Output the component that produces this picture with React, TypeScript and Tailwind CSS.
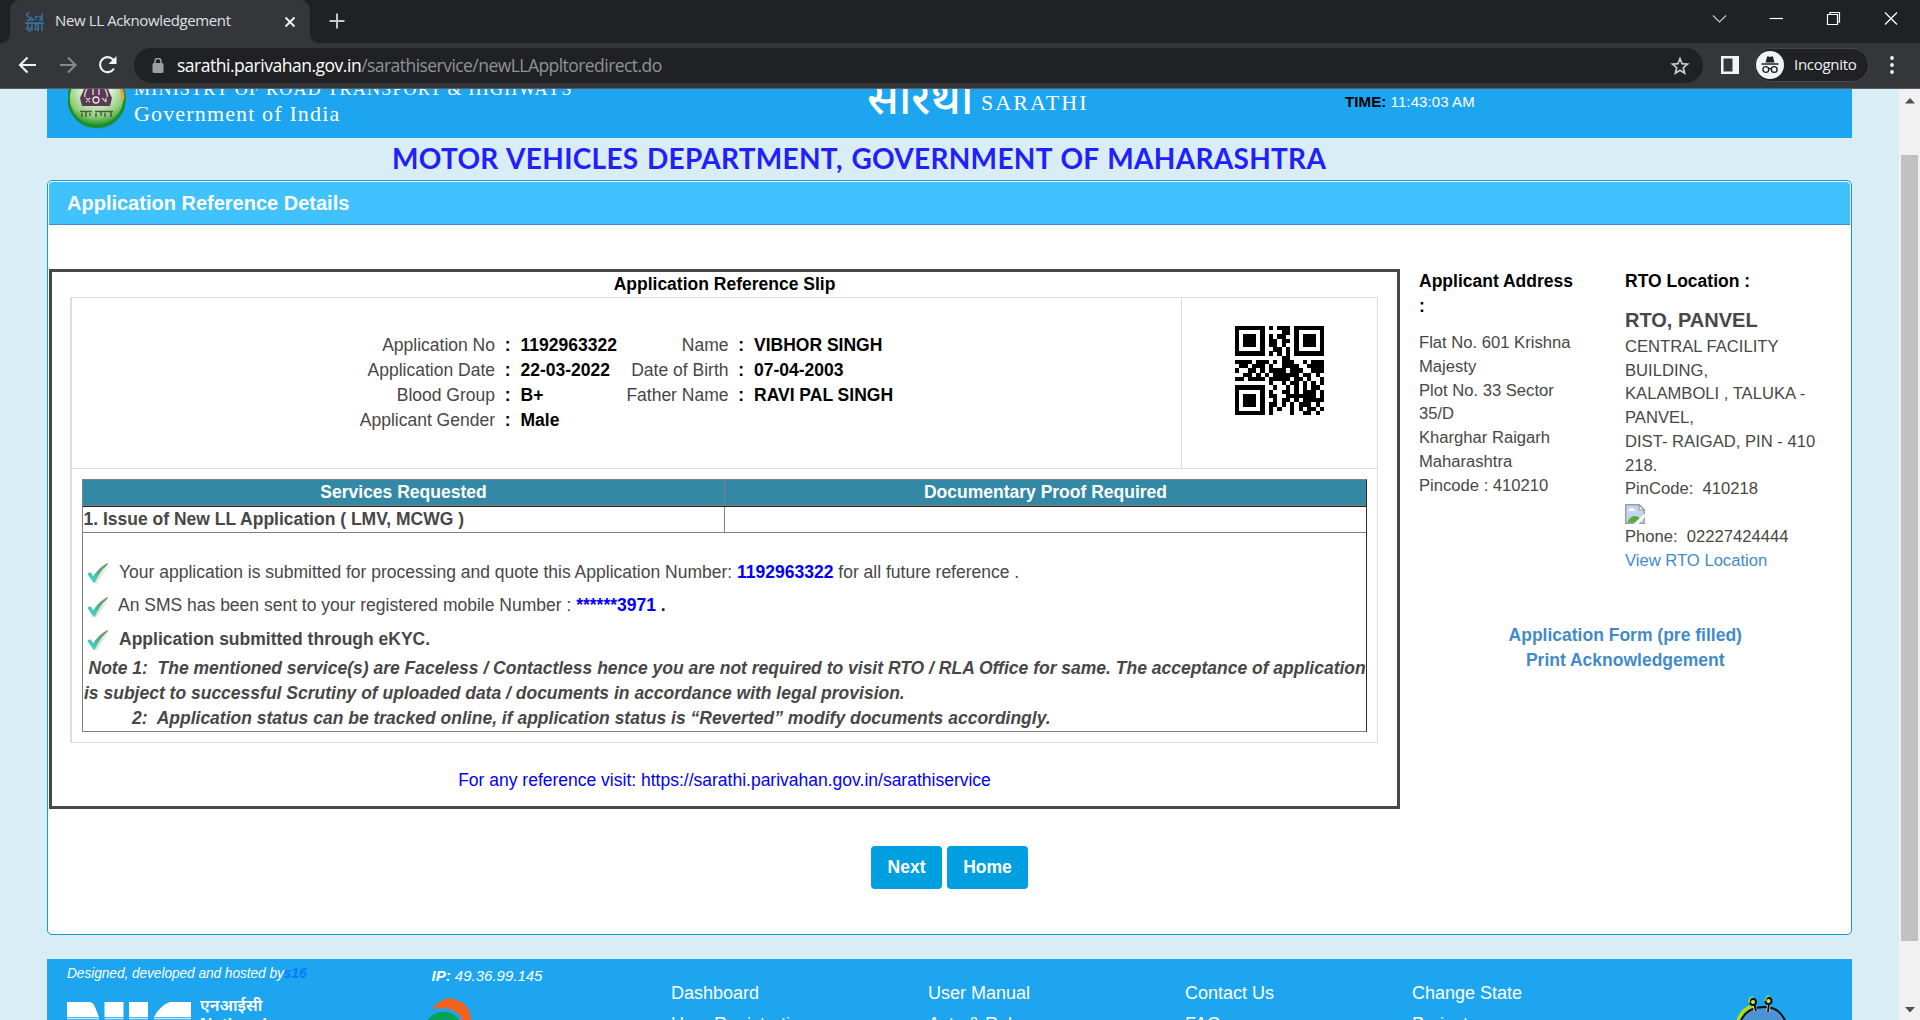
import React from "react";

const UI = "font-['Open_Sans','Noto_Sans',sans-serif]";

const QR = [
  "111111101011101111111",
  "100000100001101000001",
  "101110101011001011101",
  "101110101101101011101",
  "101110101101001011101",
  "100000100110101000001",
  "111111101010101111111",
  "000000000001100000000",
  "111101110101110010111",
  "011011101001111001111",
  "100110101111011100111",
  "001101010111111011010",
  "110111101111101101001",
  "000000001001011010101",
  "111111100100101010110",
  "100000101001101011101",
  "101110101100111111101",
  "101110100101101011111",
  "101110101101010111010",
  "100000101010010101101",
  "111111101000010011010",
];

function QrCode() {
  return (
    <svg width="89" height="89" viewBox="0 0 21 21" shapeRendering="crispEdges">
      {QR.flatMap((row, y) =>
        row.split("").map((c, x) => (c === "1" ? <rect key={`${x}-${y}`} x={x} y={y} width="1.02" height="1.02" /> : null))
      )}
    </svg>
  );
}

function TitleBar() {
  return (
    <div className="flex h-[43px] shrink-0 items-stretch bg-[#202124] text-[#dfe1e5]">
      <div className="w-[10px] bg-[#35363a]">
        <div className="h-full rounded-br-[9px] bg-[#202124]" />
      </div>
      <div className="flex w-[300px] items-center rounded-t-[10px] bg-[#35363a] pl-[15px]">
        <svg width="19" height="20" viewBox="0 0 19 20" fill="none" stroke="#3679a8" strokeWidth="1.3" className="shrink-0">
          <path d="M4 1C0 2 2 4 4 5s2 4-2 3M7 5c-3 1-1 5 1 2v2M11 8V5c1-1 2-1 2 0M14 5c3-1 3 3 0 3M17 1v8" />
          <path d="M0 11h19M3 11v3c0 3 4 4 4 0v-3v8M10 11c3 3-1 5 0 6s3 2 4-2M13 11v8M17 11v8M1 15c1 3 3 4 5 4" />
        </svg>
        <span className={`${UI} ml-[11px] w-[180px] pb-[3px] text-[15px] leading-5 tracking-[-0.38px] whitespace-nowrap`}>New LL Acknowledgement</span>
        <svg width="12" height="12" viewBox="0 0 12 12" className="ml-[49px] shrink-0" stroke="#f1f3f4" strokeWidth="1.9">
          <path d="M1.500 1.500L10.500 10.500M10.500 1.500L1.500 10.500" />
        </svg>
      </div>
      <div className="w-[10px] bg-[#35363a]">
        <div className="h-full rounded-bl-[9px] bg-[#202124]" />
      </div>
      <svg width="16" height="16" viewBox="0 0 16 16" className="mt-[13px] ml-[9px]" stroke="#c4c7ca" strokeWidth="2">
        <path d="M8 0.5V15.5M0.5 8H15.5" />
      </svg>
      <div className="flex-1" />
      <svg width="200" height="38" viewBox="0 0 200 38" className="mr-[15px]" fill="none" stroke="#fff" strokeWidth="1.2">
        <path d="M8 15.500L14.500 22L21 15.500" stroke="#c4c7ca" />
        <path d="M64.500 18.500H78" />
        <path d="M122.500 14.500H132.500V24.500H122.500ZM125 14V12.500H134.500V22H133" />
        <path d="M180 12.500L192 24.500M192 12.500L180 24.500" />
      </svg>
    </div>
  );
}

function Toolbar() {
  return (
    <div className="flex h-[46px] shrink-0 items-start border-b border-[#5a5b5e] bg-[#35363a]">
      <svg width="134" height="44" viewBox="0 0 134 44" fill="none" stroke="#f1f3f4" strokeWidth="2.1" className="shrink-0">
        <path d="M36 22H21M27.500 14.500L20 22L27.500 29.500" />
        <path d="M60 22H75M68 14.500L75.500 22L68 29.500" stroke="#87888b" />
        <path d="M114 25.500A7.500 7.500 0 1 1 113 16.500L115 18.500" />
        <path d="M116.500 13V21H108.500Z" fill="#f1f3f4" stroke="none" />
      </svg>
      <div className="mt-[5px] flex h-[35px] w-[1569px] items-center rounded-full bg-[#202124] pl-[18px]">
        <svg width="12" height="15" viewBox="0 0 12 15" className="shrink-0">
          <rect x="0.500" y="5" width="11" height="10" rx="1.500" fill="#9aa0a6" />
          <path d="M3 6V3.500A3 3 0 0 1 9 3.500V6" fill="none" stroke="#9aa0a6" strokeWidth="1.600" />
        </svg>
        <div className={`${UI} ml-[13px] flex pb-[1px] text-[17.5px] leading-6 whitespace-nowrap`}>
          <span className="tracking-[-0.48px] text-white">sarathi.parivahan.gov.in</span>
          <span className="tracking-[-0.55px] text-[#8f949a]">/sarathiservice/newLLAppltoredirect.do</span>
        </div>
        <div className="flex-1" />
        <svg width="20" height="20" viewBox="0 0 20 20" className="mr-[13px] shrink-0" fill="none" stroke="#c8cbcf" strokeWidth="1.700">
          <path d="M10 2.500L12 7.700L17.500 8.100L13.300 11.700L14.600 17.200L10 14.300L5.400 17.200L6.700 11.700L2.500 8.100L8 7.700Z" />
        </svg>
      </div>
      <svg width="18" height="18" viewBox="0 0 18 18" className="mt-[13px] ml-[18px]">
        <path fill="#f1f3f4" fillRule="evenodd" d="M0 0H18V18H0ZM2.500 2.500V15.500H11.500V2.500Z" />
      </svg>
      <div className="mt-[5px] ml-[15px] flex h-[34px] w-[115px] items-center rounded-full border border-[#45464a] bg-[#202124] pl-[1px]">
        <svg width="28" height="28" viewBox="0 0 28 28" className="shrink-0">
          <circle cx="14" cy="14" r="14" fill="#f1f3f4" />
          <path d="M9.500 11.500L11 6Q11.300 5 12.500 5.500L14 6L15.500 5.500Q16.700 5 17 6L18.500 11.500Z" fill="#202124" />
          <path d="M5.500 13H22.500" stroke="#202124" strokeWidth="1.500" />
          <g fill="none" stroke="#202124" strokeWidth="1.400">
            <circle cx="9.800" cy="18.500" r="2.900" />
            <circle cx="18.200" cy="18.500" r="2.900" />
            <path d="M12.700 18Q14 17 15.300 18" />
          </g>
        </svg>
        <span className={`${UI} ml-[10px] pb-[2px] text-[15px] leading-5 tracking-[-0.3px] text-[#f1f3f4]`}>Incognito</span>
      </div>
      <svg width="4" height="20" viewBox="0 0 4 20" className="mt-[12px] ml-[21px]" fill="#f1f3f4">
        <circle cx="2" cy="3" r="1.900" />
        <circle cx="2" cy="10" r="1.900" />
        <circle cx="2" cy="17" r="1.900" />
      </svg>
    </div>
  );
}

function SiteHeader() {
  return (
    <header className="flex h-[49px] items-start overflow-hidden bg-[#1da5f0] text-white">
      <svg width="58" height="40" viewBox="0 0 58 40" className="ml-[21px] shrink-0">
        <defs>
          <radialGradient id="badge" cx="0.5" cy="0.3" r="0.7">
            <stop offset="0.3" stopColor="#eef6e8" />
            <stop offset="0.75" stopColor="#8fce7a" />
            <stop offset="1" stopColor="#168a1b" />
          </radialGradient>
        </defs>
        <ellipse cx="29" cy="12" rx="28.500" ry="27.500" fill="#2b6f3a" opacity="0.5" />
        <circle cx="28.500" cy="9.500" r="28" fill="url(#badge)" stroke="#169020" strokeWidth="2.500" />
        <path d="M53 0Q56 6 54 12" stroke="#f59a4a" strokeWidth="3" fill="none" />
        <path d="M16 0H40Q42 5 44 9L42 17H14L12 9Q14 5 16 0Z" fill="#5b3a55" />
        <path d="M19 0Q16 4 17 8M25 0V6M31 0V6M37 0Q40 4 39 8" stroke="#d9cdd6" strokeWidth="1.400" fill="none" />
        <circle cx="28" cy="11" r="3" fill="none" stroke="#e9e2e8" strokeWidth="1.300" />
        <path d="M18 9L22 13M22 9L18 13M34 9L38 13M38 9V13" stroke="#d9cdd6" strokeWidth="1.200" />
        <path d="M12 22.500H24M27 22.500H45M14 24V28M18 23V28M22 24V27M28 24V28M33 23V27M37 24V28M43 23V28" stroke="#4e5a3e" strokeWidth="1.500" />
      </svg>
      <div className="-mt-[10px] ml-[8px] w-[440px] shrink-0 font-['Liberation_Serif',serif] whitespace-nowrap">
        <div className="h-[22px] text-[18px] leading-[20px] tracking-[1.22px]">MINISTRY OF ROAD TRANSPORT &amp; HIGHWAYS</div>
        <div className="text-[22px] leading-[26px] tracking-[1.15px]">Government of India</div>
      </div>
      <div className="-mt-[23px] ml-[293px] h-[60px] w-[101px] shrink-0 font-['Noto_Sans',sans-serif] text-[46px] leading-[60px] font-medium whitespace-nowrap">सारथी</div>
      <div className="mt-[1px] ml-[13px] w-[110px] shrink-0 font-['Liberation_Serif',serif] text-[22px] leading-[26px] tracking-[2.1px]">SARATHI</div>
      <div className="mt-[3px] ml-[254px] text-[15px] leading-[20px] tracking-[0.1px] whitespace-nowrap">
        <b className="text-black">TIME:</b> 11:43:03 AM
      </div>
    </header>
  );
}

function Check() {
  return (
    <svg width="24" height="24" viewBox="0 0 24 24" className="shrink-0">
      <defs>
        <linearGradient id="tick" x1="0.2" y1="1" x2="1" y2="0">
          <stop offset="0.1" stopColor="#3fd3d0" />
          <stop offset="0.5" stopColor="#55ad86" />
          <stop offset="1" stopColor="#8a8f5a" />
        </linearGradient>
      </defs>
      <path d="M8 21Q12 11 22 3Q14 14 9 22Z" fill="#dde3de" />
      <path d="M0.500 12Q1 10 3.500 10.500Q5.500 12 6.200 14.500Q11 6 20 1.200Q22 1 20.500 2.800Q12.500 10 8.200 20Q7 22 5.500 19.500Q3 16 0.500 12Z" fill="url(#tick)" />
    </svg>
  );
}

const DETAILS = [
  ["Application No", "1192963322", "Name", "VIBHOR SINGH"],
  ["Application Date", "22-03-2022", "Date of Birth", "07-04-2003"],
  ["Blood Group", "B+", "Father Name", "RAVI PAL SINGH"],
  ["Applicant Gender", "Male", "", ""],
];

function Slip() {
  return (
    <section className="h-[540px] w-[1351px] shrink-0 border-[3px] border-[#484646] text-[17.5px] leading-[25px] text-[#484646]">
      <h2 className="text-center font-bold text-black">Application Reference Slip</h2>
      <div className="ml-[18px] h-[446px] w-[1308px] border border-l-2 border-[#ddd]">
        <div className="flex h-[171px] border-b border-[#ddd]">
          <div className="w-[1110px] border-r border-[#ddd] pt-[35px]">
            {DETAILS.map(([l1, v1, l2, v2]) => (
              <div key={l1} className="grid h-[25px] grid-cols-[423px_25.500px_102px_106px_25.500px_1fr] whitespace-nowrap">
                <span className="text-right">{l1}</span>
                <b className="text-center text-black">:</b>
                <b className="text-black">{v1}</b>
                <span className="text-right">{l2}</span>
                <b className="text-center text-black">{l2 && ":"}</b>
                <b className="text-black">{v2}</b>
              </div>
            ))}
          </div>
          <div className="flex-1 pt-[28px] pl-[53px]">
            <QrCode />
          </div>
        </div>
        <div className="mt-[10px] ml-[10px] h-[253px] w-[1285px] border border-[#808080] border-r-[#2b2b2b]">
          <div className="grid h-[27px] grid-cols-[642px_1fr] border-b border-[#222] bg-[#3389a5] text-center font-bold text-white">
            <div className="border-r border-b border-[#808080]">Services Requested</div>
            <div className="border-b border-[#808080]">Documentary Proof Required</div>
          </div>
          <div className="grid h-[26px] grid-cols-[642px_1fr] border-b border-[#808080]">
            <div className="border-r border-[#808080] pl-[0.500px] font-bold">1. Issue of New LL Application ( LMV, MCWG )</div>
            <div />
          </div>
          <div className="pt-[27px] whitespace-pre">
            <div className="flex h-[33px] pl-[4px]">
              <span className="mt-[2px]"><Check /></span>
              <p className="ml-[8px]">
                Your application is submitted for processing and quote this Application Number: <b className="text-[#00f]">1192963322</b> for all future reference .
              </p>
            </div>
            <div className="flex h-[34px] pl-[4px]">
              <span className="mt-[3px]"><Check /></span>
              <p className="ml-[7px]">
                An SMS has been sent to your registered mobile Number : <b className="text-[#00f]">******3971</b> <b className="text-[#222]">.</b>
              </p>
            </div>
            <div className="flex h-[29px] pl-[4px]">
              <span className="mt-[2px]"><Check /></span>
              <b className="ml-[8px]">Application submitted through eKYC.</b>
            </div>
            <div className="pl-[1px] font-bold italic">
              <p className="pl-[4.500px]">{"Note 1:  The mentioned service(s) are Faceless / Contactless hence you are not required to visit RTO / RLA Office for same. The acceptance of application"}</p>
              <p>is subject to successful Scrutiny of uploaded data / documents in accordance with legal provision.</p>
              <p className="pl-[48px]">{"2:  Application status can be tracked online, if application status is “Reverted” modify documents accordingly."}</p>
            </div>
          </div>
        </div>
      </div>
      <p className="mt-[25px] text-center text-[#00f]">For any reference visit: https://sarathi.parivahan.gov.in/sarathiservice</p>
    </section>
  );
}

function BrokenImage() {
  return (
    <svg width="20" height="20" viewBox="0 0 20 20">
      <path d="M0.700 0.700H14L19.300 6V19.300H0.700Z" fill="#c3d5f3" stroke="#9a9d9d" strokeWidth="1.400" />
      <path d="M14 0.700V6H19.300Z" fill="#fff" stroke="#9a9d9d" strokeWidth="1.200" />
      <path d="M3 7Q3 5 5 5Q6.500 2.500 8.500 5Q10 5 10 7Z" fill="#fff" />
      <path d="M2.500 18.600Q4.500 12 10 12Q13 12 14.500 14L11 18.600Z" fill="#5aac38" />
      <path d="M8.500 20L20 9.500V13L13.500 20Z" fill="#fff" />
    </svg>
  );
}

const ADDRESS = ["Flat No. 601 Krishna", "Majesty", "Plot No. 33 Sector", "35/D", "Kharghar Raigarh", "Maharashtra", "Pincode : 410210"];
const RTO = ["CENTRAL FACILITY", "BUILDING,", "KALAMBOLI , TALUKA -", "PANVEL,", "DIST- RAIGAD, PIN - 410", "218.", "PinCode:  410218"];

function Sidebar() {
  return (
    <aside className="w-[412.5px] text-[16.625px] leading-[23.75px] whitespace-pre text-[#484646]">
      <div className="flex h-[354px]">
        <div className="w-[206px]">
          <h3 className="h-[62.2px] text-[17.5px] leading-[25px] font-bold text-black">{"Applicant Address\n:"}</h3>
          {ADDRESS.map((line) => <p key={line}>{line}</p>)}
        </div>
        <div>
          <h3 className="h-[37px] text-[17.5px] leading-[25px] font-bold text-black">RTO Location :</h3>
          <h4 className="text-[20px] leading-[28.8px] font-bold">RTO, PANVEL</h4>
          {RTO.map((line) => <p key={line}>{line}</p>)}
          <div className="h-[23.75px] pt-[3px]"><BrokenImage /></div>
          <p>{"Phone:  02227424444"}</p>
          <p className="text-[#428bca]">View RTO Location</p>
        </div>
      </div>
      <div className="text-center text-[17.5px] leading-[25px] font-bold text-[#428bca]">
        <p>Application Form (pre filled)</p>
        <p>Print Acknowledgement</p>
      </div>
    </aside>
  );
}

const LINKS = [
  ["Dashboard", "User Registration", "w-[257px]"],
  ["User Manual", "Acts & Rules", "w-[257px]"],
  ["Contact Us", "FAQ", "w-[227px]"],
  ["Change State", "Project", "w-[324px]"],
];

function Footer() {
  return (
    <footer className="mt-[24px] flex h-[61px] overflow-hidden bg-[#1da5f0] whitespace-nowrap text-white">
      <div className="w-[358px] shrink-0 pl-[20px]">
        <p className="h-[39px] pt-[5px] text-[13.75px] leading-[20px] tracking-[-0.08px] italic">
          Designed, developed and hosted by<b className="text-[#0a78ff]">s16</b>
        </p>
        <div className="flex h-[22px]">
          <svg width="125" height="18" viewBox="0 0 125 18" className="mt-[4px] shrink-0" fill="#fff">
            <path d="M0 0H22Q26 0 28 5L32 15H0Z" />
            <rect x="37.500" width="19" height="15" />
            <rect x="62" width="19" height="15" />
            <path d="M87 15Q95 0 108 -1H124V15Z" />
            <path d="M0 16.500H32M37.500 16.500H56.500M62 16.500H81M87 16.500H124" stroke="#c9e9fb" strokeWidth="1.500" />
          </svg>
          <div className="-mt-[3px] ml-[8px]">
            <div className="h-[20px] font-['Noto_Sans',sans-serif] text-[16.5px] leading-[20px] font-semibold">एनआईसी</div>
            <div className="text-[17px] leading-[20px] font-bold">National</div>
          </div>
        </div>
      </div>
      <div className="w-[266px] shrink-0">
        <p className="h-[38px] pt-[7px] pl-[26.500px] text-[15px] leading-[20px] italic"><b>IP:</b> 49.36.99.145</p>
        <svg width="50" height="23" viewBox="0 0 50 23" className="ml-[20px]">
          <path d="M7 12Q20 -4 34 4Q48 10 46 30L38 26Q34 8 7 12Z" fill="#f26322" />
          <path d="M0 26Q8 14 19 15Q31 15 36 26Z" fill="#07a352" />
        </svg>
      </div>
      {LINKS.map(([a, b, w]) => (
        <div key={a} className={`${w} shrink-0 pt-[21px] text-[18px]`}>
          <p className="h-[31px] leading-[26px]">{a}</p>
          <p className="leading-[26px]">{b}</p>
        </div>
      ))}
      <svg width="54" height="32" viewBox="0 0 54 32" className="mt-[36px]">
        <path d="M1 31Q4 14 18 11" stroke="#a6e01a" strokeWidth="4" fill="none" />
        <path d="M3 31Q8 12 28 12Q46 12 51 31Z" fill="#4b93d4" stroke="#111" strokeWidth="2" />
        <path d="M17 8L20 16M33 8L32 17" stroke="#ddd" strokeWidth="3.500" />
        <path d="M18 8L20 16M33 8L32 17" stroke="#111" strokeWidth="2" />
        <circle cx="17" cy="7" r="3" fill="#d8e860" stroke="#111" strokeWidth="2" />
        <circle cx="32.500" cy="6" r="3" fill="#d8e860" stroke="#111" strokeWidth="2" />
        <path d="M13 8Q13 2 17 2M29 6Q30 1 33 1" stroke="#a6e01a" strokeWidth="1.500" fill="none" />
      </svg>
    </footer>
  );
}

function Scrollbar() {
  return (
    <div className="flex w-[21px] shrink-0 flex-col items-center bg-[#f1f1f1]">
      <svg width="10" height="6" viewBox="0 0 10 6" className="mt-[9px]" fill="#505050"><path d="M0 5.500L5 0L10 5.500Z" /></svg>
      <div className="mt-[51px] h-[786px] w-[17px] bg-[#c1c1c1]" />
      <svg width="10" height="6" viewBox="0 0 10 6" className="mt-[66px]" fill="#505050"><path d="M0 0L5 5.500L10 0Z" /></svg>
    </div>
  );
}

export default function App() {
  return (
    <div className="flex h-[1020px] w-[1920px] flex-col overflow-hidden bg-white font-['Liberation_Sans',Arial,sans-serif]">
      <TitleBar />
      <Toolbar />
      <div className="flex h-[931px]">
        <div className="flex-1 overflow-hidden bg-[#d9edf7] pr-[47px] pl-[47px]">
          <SiteHeader />
          <h1 className="h-[42px] pl-[345px] font-['Lato',sans-serif] text-[28px] leading-[41px] font-bold tracking-[0.3px] [word-spacing:1.4px] whitespace-nowrap text-[#2020ff]">
            MOTOR VEHICLES DEPARTMENT, GOVERNMENT OF MAHARASHTRA
          </h1>
          <main className="h-[755px] rounded-[5px] border border-[#0a9bdc] bg-white">
            <div className="mx-[1px] mt-[1px] h-[43px] rounded-t-[4px] border-b border-[#428bca] bg-[#40c2ff] pl-[18px] text-[20px] leading-[42px] font-bold text-white">
              Application Reference Details
            </div>
            <div className="mt-[44px] flex gap-[19px] pl-[1px]">
              <Slip />
              <Sidebar />
            </div>
            <div className="mt-[37px] flex justify-center gap-[5px] text-[17.5px] font-bold text-white">
              <button className="h-[43px] w-[71px] rounded-[4px] bg-[#009fe0]">Next</button>
              <button className="h-[43px] w-[81px] rounded-[4px] bg-[#009fe0]">Home</button>
            </div>
          </main>
          <Footer />
        </div>
        <Scrollbar />
      </div>
    </div>
  );
}
